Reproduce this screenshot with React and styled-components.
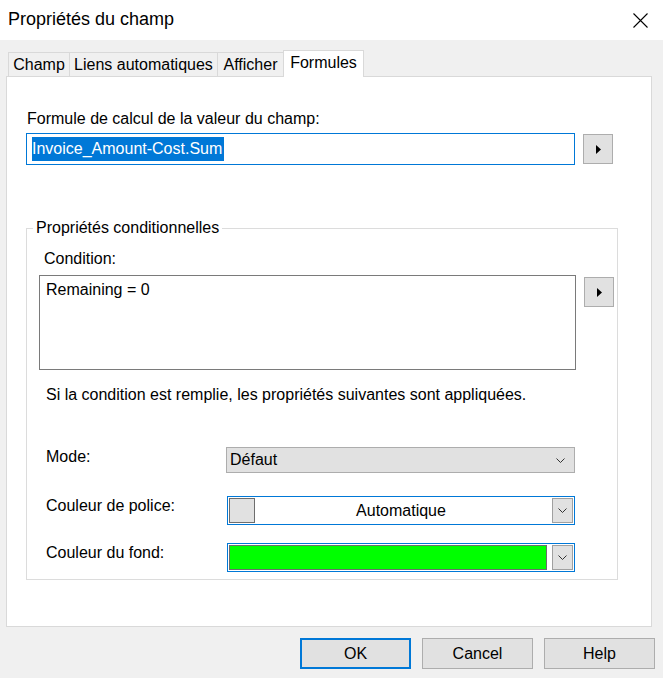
import React from "react";
import styled, { createGlobalStyle } from "styled-components";

const GlobalStyle = createGlobalStyle`
  html, body {
    margin: 0;
    padding: 0;
    background: #f0f0f0;
  }
  body {
    font-family: "Liberation Sans", Arial, sans-serif;
    font-size: 16px;
    color: #000;
  }
`;

const Chevron = () => (
  <svg width="9" height="5" viewBox="0 0 9 5">
    <path d="M0.5 0.5 L4.5 4.5 L8.5 0.5" stroke="#333" strokeWidth="1" fill="none" />
  </svg>
);

const PlayArrow = () => (
  <svg width="5" height="9" viewBox="0 0 5 9">
    <path d="M0 0 L5 4.5 L0 9 Z" fill="#000" />
  </svg>
);

const CloseIcon = () => (
  <svg width="15" height="15" viewBox="0 0 15 15">
    <path d="M0.5 0.5 L14.5 14.5 M14.5 0.5 L0.5 14.5" stroke="#000" strokeWidth="1.1" fill="none" />
  </svg>
);

const tabs = [
  { label: "Champ", width: 62 },
  { label: "Liens automatiques", width: 149 },
  { label: "Afficher", width: 67 },
  { label: "Formules", width: 81, active: true },
];

export default function App() {
  return (
    <>
      <GlobalStyle />
      <Dialog>
        <TitleBar>
          <Title>Propriétés du champ</Title>
          <CloseButton>
            <CloseIcon />
          </CloseButton>
        </TitleBar>
        <Body>
          <TabStrip>
            {tabs.map((t) => (
              <Tab key={t.label} $active={t.active} $width={t.width}>
                {t.label}
              </Tab>
            ))}
          </TabStrip>
          <Panel>
            <FormulaLabel>Formule de calcul de la valeur du champ:</FormulaLabel>
            <InputRow>
              <FormulaInput>
                <Selected>Invoice_Amount-Cost.Sum</Selected>
              </FormulaInput>
              <ArrowButton $top={1}>
                <PlayArrow />
              </ArrowButton>
            </InputRow>

            <GroupBox>
              <Legend>Propriétés conditionnelles</Legend>
              <ConditionLabel>Condition:</ConditionLabel>
              <InputRow $top={6} $left={12}>
                <ConditionArea>Remaining = 0</ConditionArea>
                <ArrowButton $top={2}>
                  <PlayArrow />
                </ArrowButton>
              </InputRow>
              <Note>Si la condition est remplie, les propriétés suivantes sont appliquées.</Note>

              <FieldRow $top={42}>
                <FieldLabel>Mode:</FieldLabel>
                <Select>
                  <span>Défaut</span>
                  <Chevron />
                </Select>
              </FieldRow>

              <FieldRow $top={23}>
                <FieldLabel>Couleur de police:</FieldLabel>
                <ColorCombo>
                  <Swatch $color="#e1e1e1" $width={26} />
                  <ComboText>Automatique</ComboText>
                  <DropButton>
                    <Chevron />
                  </DropButton>
                </ColorCombo>
              </FieldRow>

              <FieldRow $top={18}>
                <FieldLabel>Couleur du fond:</FieldLabel>
                <ColorCombo>
                  <Swatch $color="#00ff00" $grow />
                  <DropButton>
                    <Chevron />
                  </DropButton>
                </ColorCombo>
              </FieldRow>
            </GroupBox>
          </Panel>

          <ButtonRow>
            <DialogButton $default>OK</DialogButton>
            <DialogButton>Cancel</DialogButton>
            <DialogButton>Help</DialogButton>
          </ButtonRow>
        </Body>
      </Dialog>
    </>
  );
}

const Dialog = styled.div`
  width: 663px;
  height: 678px;
  display: flex;
  flex-direction: column;
  background: #f0f0f0;
  overflow: hidden;
`;

const TitleBar = styled.div`
  height: 40px;
  background: #fff;
  display: flex;
  align-items: center;
  justify-content: space-between;
  padding: 0 0 2px 8px;
  box-sizing: border-box;
`;

const Title = styled.div`
  font-size: 18px;
`;

const CloseButton = styled.div`
  width: 46px;
  height: 100%;
  display: flex;
  align-items: center;
  justify-content: center;
  padding-top: 3px;
  box-sizing: border-box;
`;

const Body = styled.div`
  flex: 1;
  display: flex;
  flex-direction: column;
  padding-top: 10px;
`;

const TabStrip = styled.div`
  display: flex;
  align-items: flex-end;
  height: 26px;
  margin-left: 8px;
`;

const Tab = styled.div`
  position: relative;
  z-index: 1;
  box-sizing: border-box;
  width: ${(p) => p.$width}px;
  height: ${(p) => (p.$active ? "27px" : "24px")};
  margin-bottom: ${(p) => (p.$active ? "-1px" : "0")};
  padding-bottom: ${(p) => (p.$active ? "3px" : "0")};
  line-height: 24px;
  text-align: center;
  white-space: nowrap;
  background: ${(p) => (p.$active ? "#fff" : "#f0f0f0")};
  border: 1px solid #d9d9d9;
  border-bottom: none;
  margin-left: -1px;
  &:first-child {
    margin-left: 0;
  }
`;

const Panel = styled.div`
  box-sizing: border-box;
  width: 646px;
  height: 551px;
  margin-left: 6px;
  background: #fff;
  border: 1px solid #d9d9d9;
  padding-left: 19px;
`;

const FormulaLabel = styled.div`
  margin: 32px 0 0 1px;
  line-height: 20px;
`;

const InputRow = styled.div`
  display: flex;
  align-items: flex-start;
  margin-top: ${(p) => p.$top ?? 4}px;
  margin-left: ${(p) => p.$left ?? 0}px;
`;

const FormulaInput = styled.div`
  box-sizing: border-box;
  width: 549px;
  height: 32px;
  border: 1px solid #0078d7;
  padding: 3px 0 0 5px;
`;

const Selected = styled.span`
  display: inline-block;
  background: #0078d7;
  color: #fff;
  line-height: 24px;
  padding-right: 2px;
`;

const ArrowButton = styled.div`
  box-sizing: border-box;
  width: 30px;
  height: 30px;
  margin: ${(p) => p.$top}px 0 0 8px;
  background: #e1e1e1;
  border: 1px solid #adadad;
  display: flex;
  align-items: center;
  justify-content: center;
`;

const GroupBox = styled.fieldset`
  box-sizing: border-box;
  width: 592px;
  margin: 53px 0 0 0;
  padding: 0 0 7px 0;
  border: 1px solid #dcdcdc;
  min-width: 0;
`;

const Legend = styled.legend`
  margin-left: 6px;
  padding: 0 3px;
  line-height: 20px;
`;

const ConditionLabel = styled.div`
  margin: 11px 0 0 17px;
  line-height: 20px;
`;

const ConditionArea = styled.div`
  box-sizing: border-box;
  width: 537px;
  height: 95px;
  border: 1px solid #7a7a7a;
  padding: 4px 0 0 6px;
  line-height: 20px;
`;

const Note = styled.div`
  margin: 15px 0 0 19px;
  line-height: 20px;
`;

const FieldRow = styled.div`
  display: flex;
  align-items: flex-start;
  margin-top: ${(p) => p.$top}px;
  padding-left: 19px;
`;

const FieldLabel = styled.div`
  width: 180px;
  line-height: 20px;
`;

const Select = styled.div`
  box-sizing: border-box;
  width: 349px;
  height: 26px;
  background: #e1e1e1;
  border: 1px solid #adadad;
  display: flex;
  align-items: center;
  justify-content: space-between;
  padding: 0 9px 0 3px;
`;

const ColorCombo = styled.div`
  box-sizing: border-box;
  width: 348px;
  height: 29px;
  margin-left: 1px;
  border: 1px solid #0078d7;
  background: #fff;
  padding: 1px;
  display: flex;
  align-items: stretch;
`;

const Swatch = styled.div`
  box-sizing: border-box;
  ${(p) => (p.$grow ? "flex: 1;" : `width: ${p.$width}px;`)}
  background: ${(p) => p.$color};
  border: 1px solid #6d6d6d;
`;

const ComboText = styled.div`
  flex: 1;
  display: flex;
  align-items: center;
  justify-content: center;
`;

const DropButton = styled.div`
  box-sizing: border-box;
  width: 21px;
  margin-left: 5px;
  background: #e1e1e1;
  border: 1px solid #a0a0a0;
  display: flex;
  align-items: center;
  justify-content: center;
`;

const ButtonRow = styled.div`
  display: flex;
  justify-content: flex-end;
  gap: 11px;
  margin: 11px 8px 0 0;
`;

const DialogButton = styled.div`
  box-sizing: border-box;
  width: 111px;
  height: 31px;
  background: #e1e1e1;
  border: ${(p) => (p.$default ? "2px solid #0078d7" : "1px solid #adadad")};
  display: flex;
  align-items: center;
  justify-content: center;
`;
